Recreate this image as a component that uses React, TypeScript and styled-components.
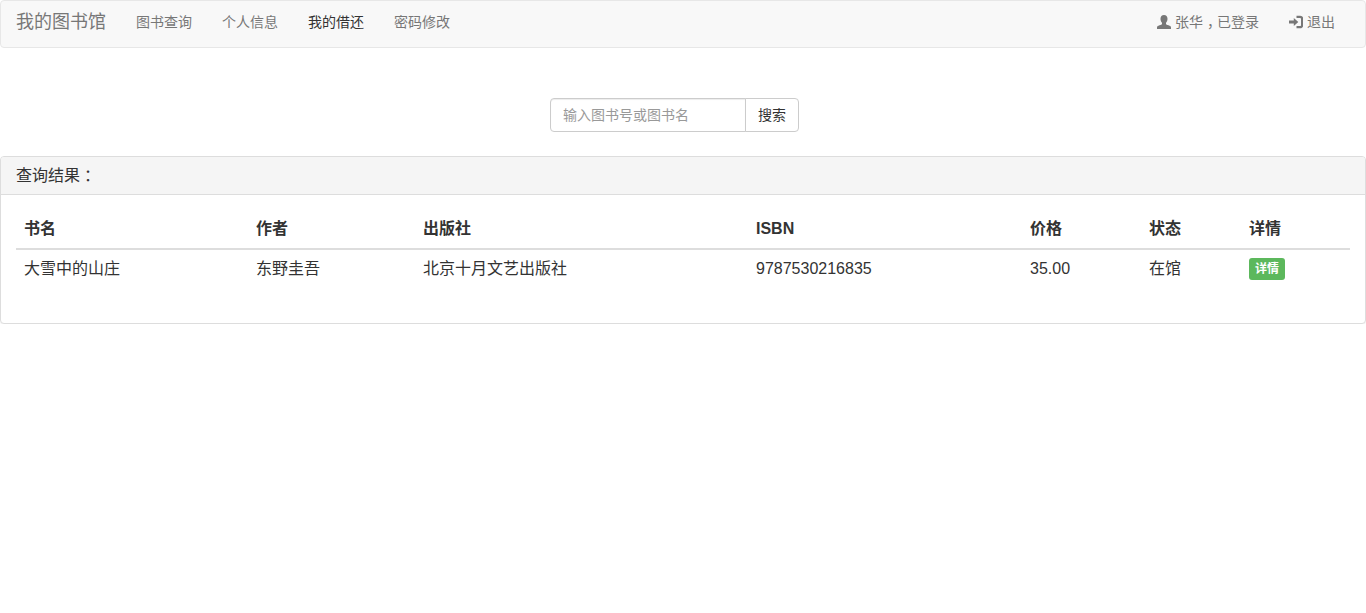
import React from "react";
import styled, { createGlobalStyle } from "styled-components";

const Global = createGlobalStyle`
  * { box-sizing: border-box; }
  html, body { margin: 0; background: #fff; }
  body {
    font-family: "Liberation Sans", "Noto Sans CJK SC", sans-serif;
    font-size: 14px;
    line-height: 20px;
    color: #333;
  }
`;

const Navbar = styled.nav`
  display: flex;
  align-items: stretch;
  height: 48px;
  margin-bottom: 50px;
  background: #f8f8f8;
  border: 1px solid #e7e7e7;
  border-radius: 4px;
  padding-right: 15px;
`;
const Brand = styled.a`
  padding: 11px 15px 15px;
  font-size: 18px;
  line-height: 20px;
  color: #777;
`;
const NavItem = styled.a<{ $active?: boolean }>`
  display: flex;
  align-items: center;
  gap: 4px;
  padding: 0 15px 4px;
  color: ${(p) => (p.$active ? "#333" : "#777")};
`;
const Spacer = styled.div`
  flex: 1;
`;
const Icon = styled.svg`
  width: 14px;
  height: 14px;
  fill: #777;
  flex: none;
`;
const Punct = styled.span`
  font-feature-settings: "halt";
  padding: 0 3px 0 4px;
`;

const SearchRow = styled.form`
  display: flex;
  height: 34px;
  margin: 0 0 24px 550px;
`;
const SearchInput = styled.input`
  width: 196px;
  height: 34px;
  padding: 6px 12px;
  font: inherit;
  color: #555;
  background: #fff;
  border: 1px solid #ccc;
  border-radius: 4px 0 0 4px;
  box-shadow: inset 0 1px 1px rgba(0, 0, 0, 0.075);
  outline: none;
  &::placeholder { color: #999; opacity: 1; }
`;
const SearchButton = styled.button`
  width: 54px;
  height: 34px;
  margin-left: -1px;
  padding: 0;
  font: inherit;
  color: #333;
  background: #fff;
  border: 1px solid #ccc;
  border-radius: 0 4px 4px 0;
`;

const Panel = styled.section`
  height: 168px;
  background: #fff;
  border: 1px solid #ddd;
  border-radius: 4px;
  box-shadow: 0 1px 1px rgba(0, 0, 0, 0.05);
`;
const PanelHeading = styled.div`
  height: 38px;
  padding: 10px 15px;
  background: #f5f5f5;
  border-bottom: 1px solid #ddd;
  border-radius: 3px 3px 0 0;
  font-size: 16px;
  line-height: 18px;
`;
const PanelColon = styled.span`
  font-family: "Liberation Sans", "Noto Sans CJK TC", sans-serif;
  vertical-align: -1px;
`;
const PanelBody = styled.div`
  padding: 15px;
`;
const Table = styled.table`
  width: 100%;
  table-layout: fixed;
  border-collapse: collapse;
  font-size: 16px;
  line-height: 23px;
`;
const Col = styled.col<{ $w: number }>`
  width: ${(p) => p.$w}px;
`;
const Th = styled.th`
  padding: 7px 8px 8px;
  text-align: left;
  font-weight: 700;
  border-bottom: 2px solid #ddd;
`;
const Td = styled.td`
  padding: 7px 8px 9px;
`;
const Badge = styled.a`
  display: flex;
  align-items: center;
  justify-content: center;
  width: 36px;
  height: 22px;
  margin-top: 1px;
  font-size: 12px;
  font-weight: 700;
  line-height: 12px;
  color: #fff;
  background: #5cb85c;
  border-radius: 3px;
`;

const widths = [232, 167, 333, 274, 119, 100, 109];
const heads = ["书名", "作者", "出版社", "ISBN", "价格", "状态", "详情"];
const cells = ["大雪中的山庄", "东野圭吾", "北京十月文艺出版社", "9787530216835", "35.00", "在馆"];

export default function App() {
  return (
    <>
      <Global />
      <Navbar>
        <Brand>我的图书馆</Brand>
        <NavItem>图书查询</NavItem>
        <NavItem>个人信息</NavItem>
        <NavItem $active>我的借还</NavItem>
        <NavItem>密码修改</NavItem>
        <Spacer />
        <NavItem>
          <Icon viewBox="0 0 14 14">
            <path d="M7 0c2.2 0 3.5 1.6 3.5 3.8 0 1.6-.6 3-1.5 3.9v1.2c0 .5 1.1.9 2.5 1.4 1.500.5 2.500 1 2.500 2.300V14H0v-1.400c0-1.300 1-1.800 2.500-2.300C3.900 9.800 5 9.400 5 8.900V7.700C4.100 6.800 3.500 5.400 3.500 3.800 3.500 1.600 4.800 0 7 0z" />
          </Icon>
          <span>
            张华<Punct>，</Punct>已登录
          </span>
        </NavItem>
        <NavItem>
          <Icon viewBox="0 0 14 14">
            <path d="M4.800 3 9.300 7 4.800 11V8.500H0v-3h4.800V3z" />
            <path d="M7.500.8h3.700C13 .8 14.200 2 14.200 3.800v6.400c0 1.800-1.200 3-3 3H7.500v-2.100h3.300c.8 0 1.200-.4 1.200-1.200V4.100c0-.8-.4-1.200-1.200-1.200H7.500V.8z" />
          </Icon>
          退出
        </NavItem>
      </Navbar>
      <SearchRow onSubmit={(e) => e.preventDefault()}>
        <SearchInput placeholder="输入图书号或图书名" />
        <SearchButton type="submit">搜索</SearchButton>
      </SearchRow>
      <Panel>
        <PanelHeading>
          查询结果<PanelColon>：</PanelColon>
        </PanelHeading>
        <PanelBody>
          <Table>
            <colgroup>
              {widths.map((w) => (
                <Col key={w} $w={w} />
              ))}
            </colgroup>
            <thead>
              <tr>
                {heads.map((h) => (
                  <Th key={h}>{h}</Th>
                ))}
              </tr>
            </thead>
            <tbody>
              <tr>
                {cells.map((c) => (
                  <Td key={c}>{c}</Td>
                ))}
                <Td>
                  <Badge>详情</Badge>
                </Td>
              </tr>
            </tbody>
          </Table>
        </PanelBody>
      </Panel>
    </>
  );
}
